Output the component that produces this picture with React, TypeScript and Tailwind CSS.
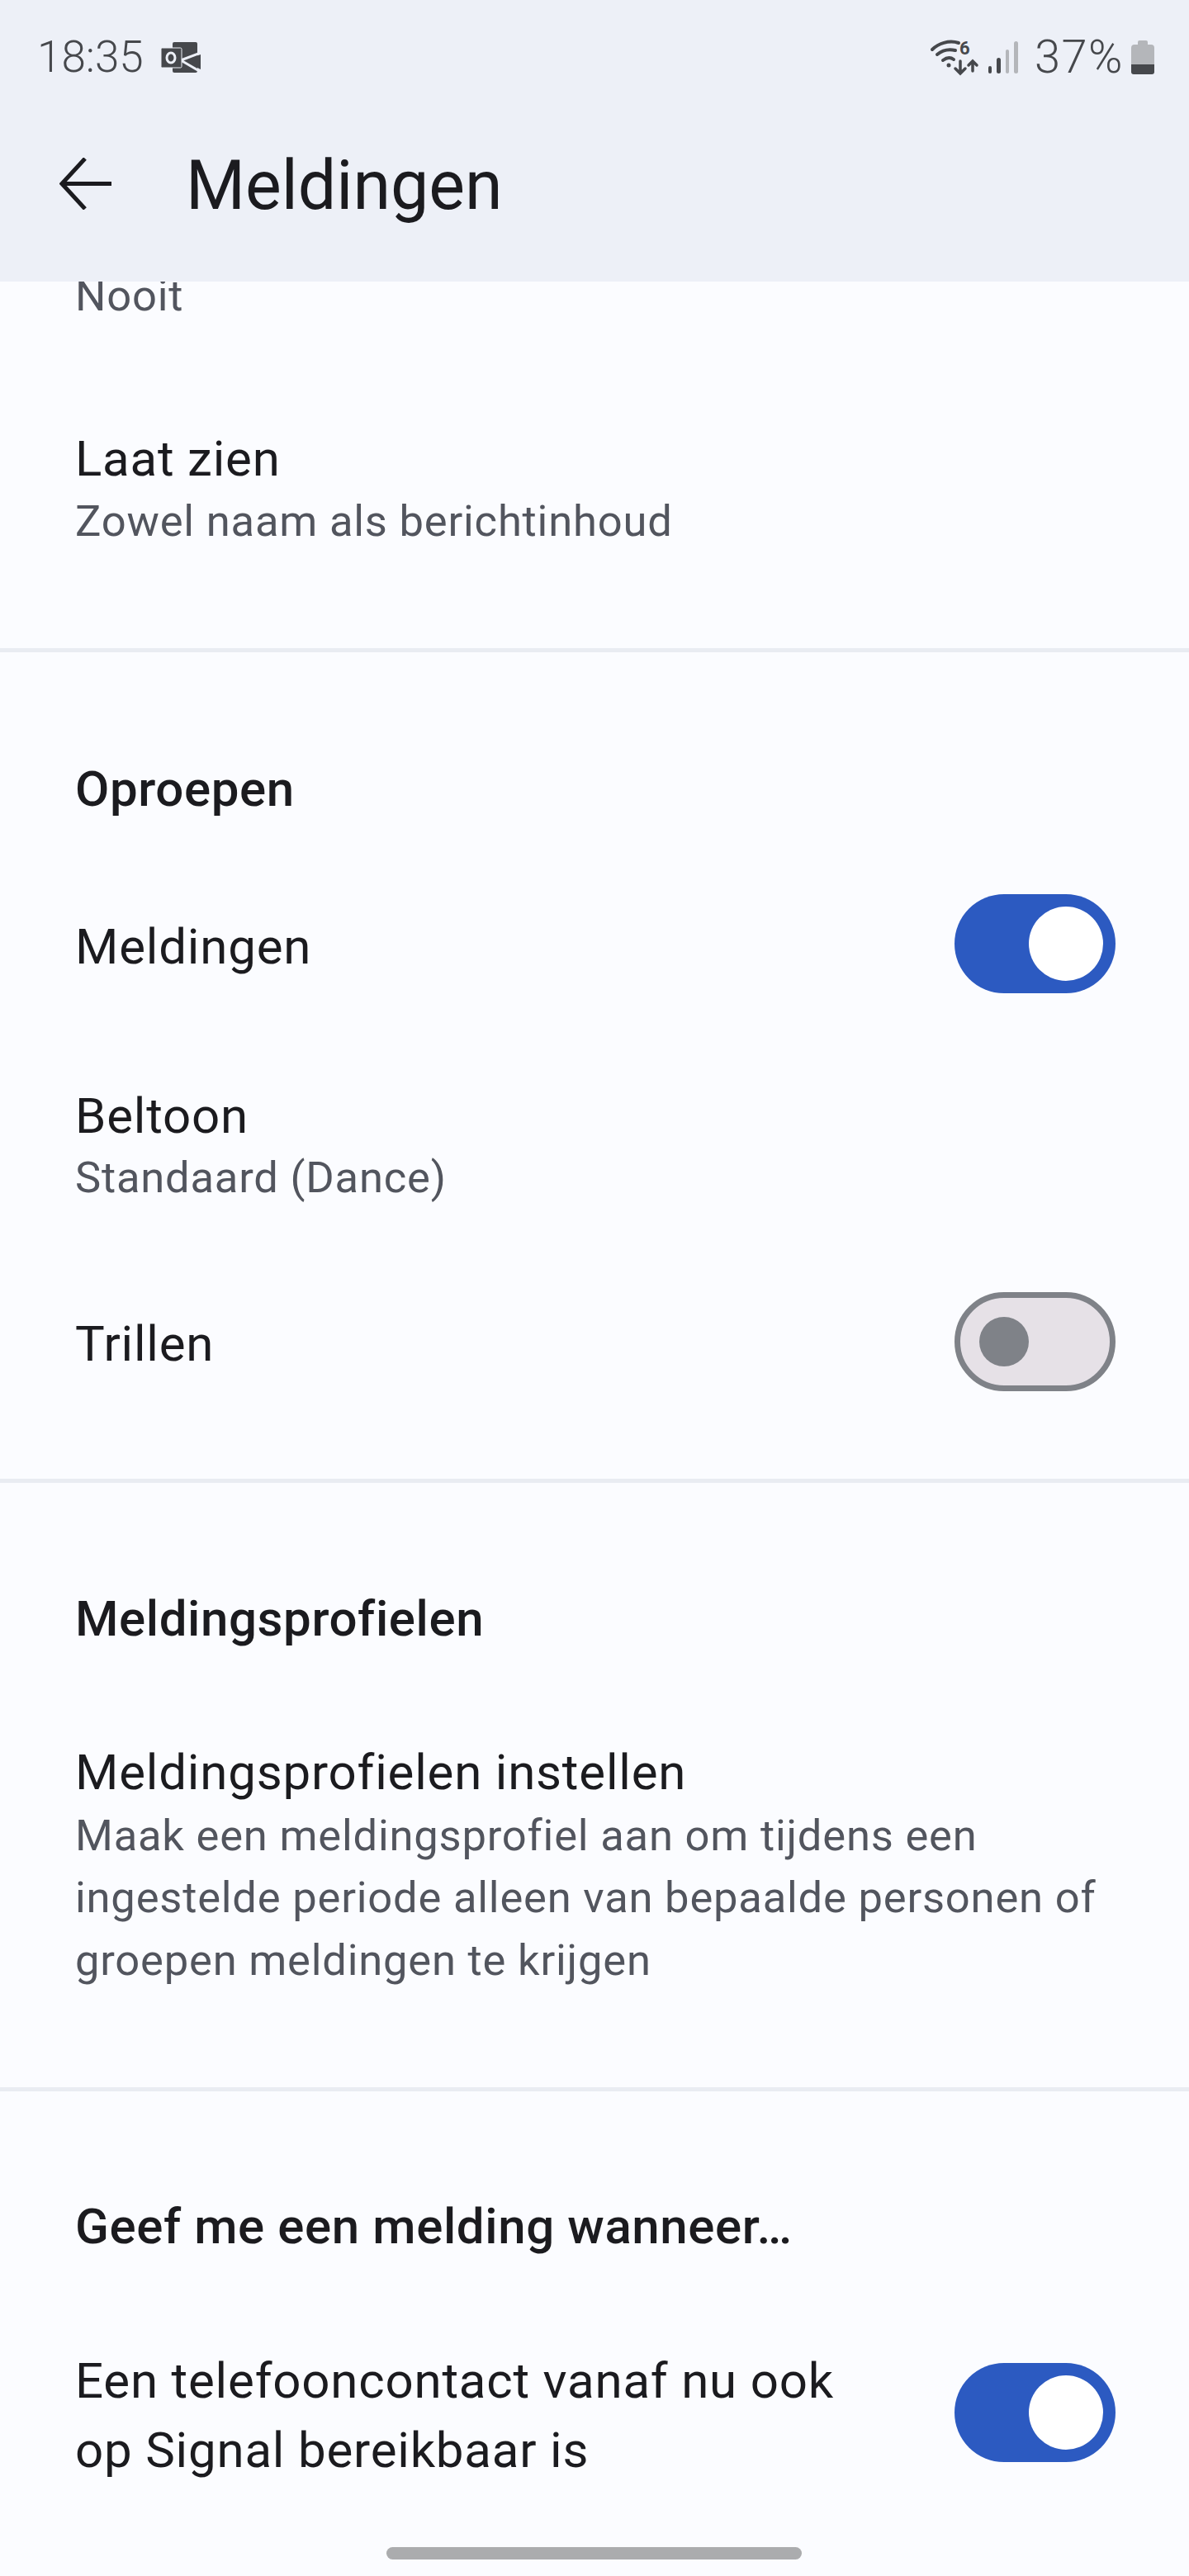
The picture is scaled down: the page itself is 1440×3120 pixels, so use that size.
function OutlookIcon() {
  return (
    <svg className="w-[48px] h-[37px]" viewBox="0 0 48 37">
      <rect x="14" y="0" width="30" height="37" rx="2" fill="#46484c" />
      <path fill="#46484c" d="M26 22 48 15V33z" />
      <path fill="none" stroke="#edf0f7" strokeWidth="3" d="M24 22 48 13M24 22 48 36" />
      <rect x="0" y="7" width="25" height="24" rx="1.500" fill="#46484c" stroke="#edf0f7" strokeWidth="1" />
      <ellipse cx="12" cy="19" rx="5" ry="6" fill="none" stroke="#edf0f7" strokeWidth="3" />
    </svg>
  );
}

function WifiIcon() {
  return (
    <svg className="w-[57px] h-[43px] overflow-visible" viewBox="0 0 57 43" fill="none" stroke="#46484c" strokeLinecap="round">
      <path strokeWidth="4" d="M2 12C9 5 22 0 34 4" />
      <path strokeWidth="4" d="M8 18C14 13 22 11 30 13" />
      <path strokeWidth="4" d="M15 25C19 22 24 21 28 24" />
      <circle cx="22" cy="31" r="2.500" fill="#46484c" stroke="none" />
      <path strokeWidth="3.500" d="M36 26v15M30 35l6 6 6-6" />
      <path strokeWidth="3.500" d="M51 38V26M46 31l5-5 5 5" />
      <text x="35" y="18" fontSize="22" fontWeight="700" fill="#46484c" stroke="none" fontFamily="Roboto, sans-serif">
        6
      </text>
    </svg>
  );
}

function SignalIcon() {
  return (
    <div className="flex items-end gap-[6px] h-[39px]">
      <div className="w-[4.500px] h-[9px] rounded-full bg-[#46484c]" />
      <div className="w-[4.500px] h-[19px] rounded-full bg-[#46484c]" />
      <div className="w-[4.500px] h-[29px] rounded-full bg-[#b4b6ba]" />
      <div className="w-[4.500px] h-[39px] rounded-full bg-[#b4b6ba]" />
    </div>
  );
}

function BatteryIcon() {
  return (
    <svg className="w-[28px] h-[41px]" viewBox="0 0 28 41">
      <path fill="#b4b6ba" d="M8 2a2 2 0 0 1 2-2h8a2 2 0 0 1 2 2v3h4a4 4 0 0 1 4 4v20H0V9a4 4 0 0 1 4-4h4z" />
      <path fill="#46484c" d="M0 29h28v9a3 3 0 0 1-3 3H3a3 3 0 0 1-3-3z" />
    </svg>
  );
}

function Toggle({ on }: { on: boolean }) {
  if (on) {
    return (
      <div className="w-[195px] h-[120px] shrink-0 rounded-full bg-[#2c5ac1] flex items-center justify-end pr-[15px]">
        <div className="w-[90px] h-[90px] rounded-full bg-white" />
      </div>
    );
  }
  return (
    <div className="w-[195px] h-[120px] shrink-0 rounded-full bg-[#e6e1e7] border-[7px] border-[#7f8288] flex items-center pl-[23px]">
      <div className="w-[60px] h-[60px] rounded-full bg-[#7f8288]" />
    </div>
  );
}

function Divider() {
  return <div className="h-[5px] bg-[#e9ecf2]" />;
}

function Title({ children }: { children: React.ReactNode }) {
  return <div className="text-[60px] leading-[75px] tracking-[0.8px] text-[#1b1b1f]">{children}</div>;
}

function Sub({ children }: { children: React.ReactNode }) {
  return <div className="text-[52.500px] leading-[75.500px] tracking-[0.8px] text-[#52555e]">{children}</div>;
}

function SectionTitle({ children }: { children: React.ReactNode }) {
  return <div className="text-[60px] leading-[75px] font-medium tracking-[0.6px] text-[#1b1b1f]">{children}</div>;
}

export default function App() {
  return (
    <div className="relative w-[1440px] h-[3120px] overflow-hidden bg-[#fbfcff] font-['Roboto',sans-serif]">
      {/* App bar */}
      <div className="relative z-10 h-[341px] bg-[#edf0f7]">
        <div className="flex items-center justify-between pt-[48px] pl-[45px] pr-[42px]">
          <div className="flex items-center gap-[21px]">
            <span className="text-[53px] leading-[43px] font-light text-[#46484c]">18:35</span>
            <OutlookIcon />
          </div>
          <div className="flex items-center">
            <WifiIcon />
            <div className="ml-[13px]">
              <SignalIcon />
            </div>
            <span className="ml-[20px] text-[56px] leading-[43px] font-light tracking-[1.500px] text-[#46484c]">37%</span>
            <div className="ml-[9px]">
              <BatteryIcon />
            </div>
          </div>
        </div>
        <div className="flex items-center pl-[72px] mt-[83px]">
          <svg className="w-[63px] h-[63px]" viewBox="0 0 63 63" fill="none" stroke="#1b1b1f" strokeWidth="5">
            <path d="M63 31.500H3M31 1 3 31.500 31 62" />
          </svg>
          <h1 className="ml-[90px] pt-[6px] text-[82.500px] leading-[90px] font-normal text-[#1b1b1f]">Meldingen</h1>
        </div>
      </div>

      {/* Settings list */}
      <div className="-mt-[20px]">
        <div className="px-[91px] pb-[121px]">
          <Sub>Nooit</Sub>
        </div>
        <div className="px-[91px] pb-[116px]">
          <div className="pb-[1px]">
            <Title>Laat zien</Title>
          </div>
          <Sub>Zowel naam als berichtinhoud</Sub>
        </div>
        <Divider />

        <div className="px-[91px] pt-[128px] pb-[90px]">
          <SectionTitle>Oproepen</SectionTitle>
        </div>
        <div className="flex items-center justify-between pl-[91px] pr-[89px] pb-[111px]">
          <div className="pt-[7px]">
            <Title>Meldingen</Title>
          </div>
          <Toggle on />
        </div>
        <div className="px-[91px] pb-[100px]">
          <Title>Beltoon</Title>
          <Sub>Standaard (Dance)</Sub>
        </div>
        <div className="flex items-center justify-between pl-[91px] pr-[89px] pb-[106px]">
          <div className="pt-[6px]">
            <Title>Trillen</Title>
          </div>
          <Toggle on={false} />
        </div>
        <Divider />

        <div className="px-[91px] pt-[127px] pb-[111px]">
          <SectionTitle>Meldingsprofielen</SectionTitle>
        </div>
        <div className="pl-[91px] pr-[89px] pb-[116px]">
          <div className="pb-[2px]">
            <Title>Meldingsprofielen instellen</Title>
          </div>
          <Sub>
            Maak een meldingsprofiel aan om tijdens een
            <br />
            ingestelde periode alleen van bepaalde personen of
            <br />
            groepen meldingen te krijgen
          </Sub>
        </div>
        <Divider />

        <div className="px-[91px] pt-[126px] pb-[100px]">
          <SectionTitle>Geef me een melding wanneer…</SectionTitle>
        </div>
        <div className="flex items-center justify-between pl-[91px] pr-[89px]">
          <div className="pt-[8px] text-[60px] leading-[84px] tracking-[0.8px] text-[#1b1b1f]">
            Een telefooncontact vanaf nu ook
            <br />
            op Signal bereikbaar is
          </div>
          <Toggle on />
        </div>
      </div>

      {/* Gesture bar */}
      <div className="absolute bottom-[20px] left-[468px] w-[503px] h-[15px] rounded-full bg-[#abacae]" />
    </div>
  );
}
